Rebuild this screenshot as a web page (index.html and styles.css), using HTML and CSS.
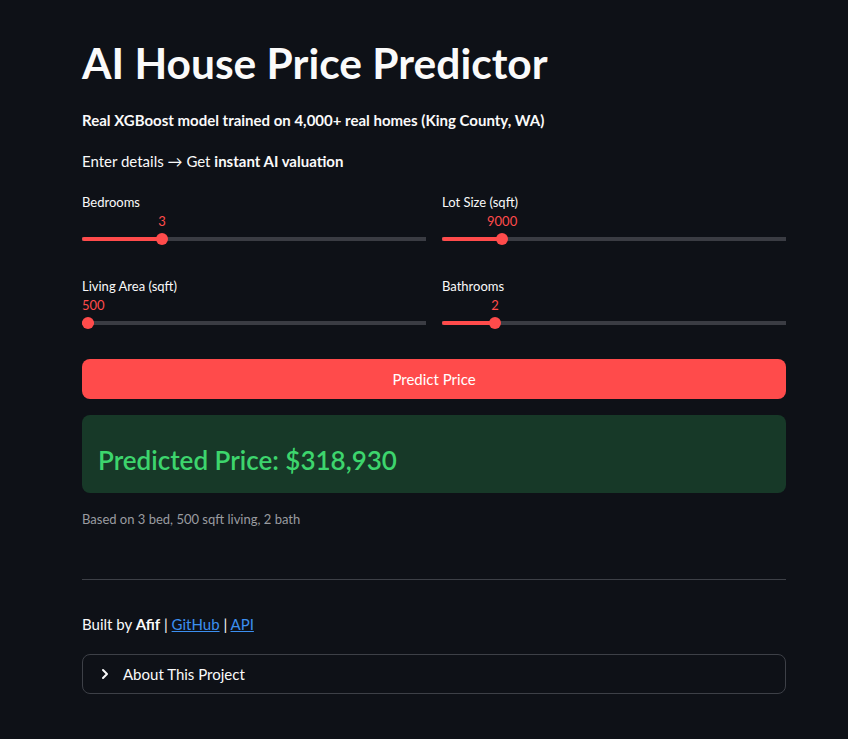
FILE: index.html
```html
<!DOCTYPE html>
<html lang="en">
<head>
  <meta charset="UTF-8" />
  <meta name="viewport" content="width=device-width, initial-scale=1.0" />
  <title>AI House Price Predictor</title>
  <link rel="stylesheet" href="styles.css">
</head>
<body>
  <main class="block">
    <h1>AI House Price Predictor</h1>
    <p class="lead"><strong>Real XGBoost model trained on 4,000+ real homes (King County, WA)</strong></p>
    <p class="intro">Enter details → Get <strong>instant AI valuation</strong></p>

    <div class="columns">
      <div class="col">
        <div class="slider">
          <label>Bedrooms</label>
          <div class="slider-box">
            <div class="rail">
              <div class="fill" style="width: 22.3%"></div>
              <div class="thumb" style="left: 22.3%"></div>
              <span class="value" style="left: 22.3%">3</span>
            </div>
          </div>
        </div>
        <div class="slider">
          <label>Living Area (sqft)</label>
          <div class="slider-box">
            <div class="rail">
              <div class="fill" style="width: 0%"></div>
              <div class="thumb" style="left: 0%"></div>
              <span class="value first" style="left: 0%">500</span>
            </div>
          </div>
        </div>
      </div>
      <div class="col">
        <div class="slider">
          <label>Lot Size (sqft)</label>
          <div class="slider-box">
            <div class="rail">
              <div class="fill" style="width: 16.3%"></div>
              <div class="thumb" style="left: 16.3%"></div>
              <span class="value" style="left: 16.3%">9000</span>
            </div>
          </div>
        </div>
        <div class="slider">
          <label>Bathrooms</label>
          <div class="slider-box">
            <div class="rail">
              <div class="fill" style="width: 14.2%"></div>
              <div class="thumb" style="left: 14.2%"></div>
              <span class="value" style="left: 14.2%">2</span>
            </div>
          </div>
        </div>
      </div>
    </div>

    <button class="primary">Predict Price</button>

    <div class="success">
      <h3>Predicted Price: $318,930</h3>
    </div>

    <p class="caption">Based on 3 bed, 500 sqft living, 2 bath</p>

    <hr>

    <p class="footer">Built by <strong>Afif</strong> | <a href="#">GitHub</a> | <a href="#">API</a></p>

    <details class="expander">
      <summary>
        <svg width="16" height="16" viewBox="0 0 24 24" fill="none" stroke="#fafafa" stroke-width="3" stroke-linecap="round" stroke-linejoin="round"><polyline points="9 6 15 12 9 18"></polyline></svg>
        About This Project
      </summary>
    </details>
  </main>
</body>
</html>
```

FILE: styles.css
```css
* {
  box-sizing: border-box;
}

body {
  margin: 0;
  background-color: #0e1117;
  color: #fafafa;
  font-family: Lato, "Noto Sans", sans-serif;
  font-size: 15px;
}

.block {
  width: 704px;
  margin-left: 82px;
  padding: 38px 0 40px;
}

h1 {
  font-size: 42.5px;
  font-weight: 700;
  margin: 0 0 20px;
  line-height: 50px;
}

.lead {
  margin: 0 0 17px;
  line-height: 24px;
}

.intro {
  margin: 0 0 20px;
  line-height: 24px;
}

.columns {
  display: flex;
  gap: 16px;
}

.col {
  flex: 1;
  display: flex;
  flex-direction: column;
  gap: 26px;
}

.slider label {
  display: block;
  font-size: 13px;
  line-height: 18px;
}

.slider-box {
  position: relative;
  height: 40px;
  border-radius: 2px;
  background: linear-gradient(#3a3c43, #3a3c43) 0 26px / 100% 4px no-repeat;
}

/* the thumb centre runs from 6px to width - 6px */
.rail {
  position: absolute;
  left: 6px;
  right: 6px;
  top: 0;
  bottom: 0;
}

.fill {
  position: absolute;
  top: 26px;
  left: -6px;
  height: 4px;
  border-radius: 2px;
  background-color: #ff4b4b;
  min-width: 6px;
  padding-left: 6px;
  box-sizing: content-box;
}

.thumb {
  position: absolute;
  top: 22px;
  width: 12px;
  height: 12px;
  margin-left: -6px;
  border-radius: 50%;
  background-color: #ff4b4b;
}

.value {
  position: absolute;
  top: 2px;
  transform: translateX(-50%);
  font-size: 13px;
  color: #ff4b4b;
}

.value.first {
  transform: none;
  margin-left: -6px;
}

.primary {
  display: block;
  width: 100%;
  margin-top: 24px;
  height: 40px;
  border: none;
  border-radius: 8px;
  background-color: #ff4b4b;
  color: #fff;
  font-family: inherit;
  font-size: 15px;
}

.success {
  margin-top: 16px;
  height: 78px;
  border-radius: 8px;
  background-color: #173928;
  padding: 28px 16px 0;
}

.success h3 {
  margin: 0;
  font-size: 26px;
  font-weight: 600;
  color: #3dd56d;
  line-height: 34px;
}

.caption {
  margin: 18px 0 0;
  font-size: 13px;
  color: #9a9ca0;
}

hr {
  border: none;
  border-top: 1px solid #3d4047;
  margin: 52px 0 32px;
}

.footer {
  margin: 0 0 18px;
  line-height: 24px;
}

.footer a {
  color: #3c8ff0;
}

.expander {
  border: 1px solid #3d4047;
  border-radius: 8px;
}

.expander summary {
  list-style: none;
  display: flex;
  align-items: center;
  gap: 10px;
  height: 38px;
  padding: 0 14px;
}

.expander summary::-webkit-details-marker {
  display: none;
}
```
